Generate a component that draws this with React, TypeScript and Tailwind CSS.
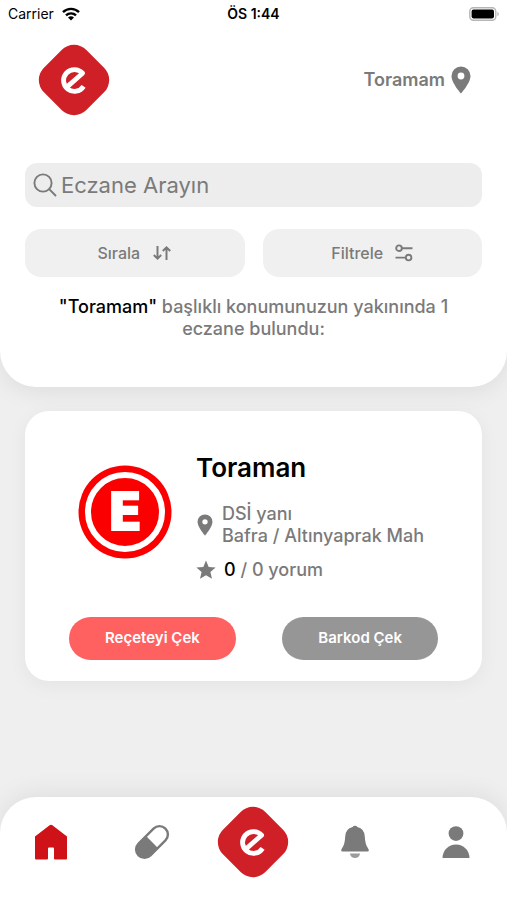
import type { ReactNode } from 'react'

const FONT = "font-['Inter','Noto_Sans',sans-serif]"

interface Pharmacy {
  id: number
  name: string
  street: string
  district: string
  rating: number
  comments: number
}

const pharmacies: Pharmacy[] = [
  { id: 1, name: 'Toraman', street: 'DSİ yanı', district: 'Bafra / Altınyaprak Mah', rating: 0, comments: 0 },
]

export default function App() {
  return (
    <div className={`flex min-h-screen flex-col bg-[#efefef] text-[#7a7a7a] ${FONT}`}>
      <header className="rounded-b-[36px] bg-white pb-[47px] shadow-[0_4px_24px_rgba(0,0,0,0.08)]">
        <StatusBar />

        <div className="flex items-center justify-between pt-4 pr-9 pl-[38px]">
          <a href="#home" aria-label="Ana sayfa">
            <Logo />
          </a>
          <button className="flex items-center gap-1.5 text-lg font-semibold">
            Toramam
            <PinIcon className="h-7 w-5" />
          </button>
        </div>

        <div className="px-[25px] pt-[47px]">
          <label className="flex h-11 items-center gap-1 rounded-xl bg-[#ededed] px-2">
            <SearchIcon />
            <input
              type="text"
              aria-label="Eczane Arayın"
              placeholder="Eczane Arayın"
              className="w-full bg-transparent text-[22px] outline-none placeholder:text-[#7a7a7a]"
            />
          </label>

          <div className="mt-[22px] grid grid-cols-2 gap-[18px]">
            <FilterButton label="Sırala" icon={<SortIcon />} />
            <FilterButton label="Filtrele" icon={<SlidersIcon />} />
          </div>

          <p className="mt-[19px] px-5 text-center text-lg leading-[22px] font-medium">
            <span className="text-black">"Toramam"</span> başlıklı konumunuzun yakınında 1 eczane bulundu:
          </p>
        </div>
      </header>

      <main className="px-[25px] py-6">
        {pharmacies.map((pharmacy) => (
          <PharmacyCard key={pharmacy.id} pharmacy={pharmacy} />
        ))}
      </main>

      <BottomNav />
    </div>
  )
}

function StatusBar() {
  return (
    <div className="grid h-7 grid-cols-3 items-center px-2 text-sm text-black">
      <div className="flex items-center gap-2">
        Carrier
        <svg viewBox="0 0 18 14" className="h-[14px] w-[18px]" fill="none" stroke="currentColor" strokeWidth="2.4">
          <path d="M1 5.2a11.4 11.4 0 0 1 16 0" />
          <path d="M4 8.4a7.1 7.1 0 0 1 10 0" />
          <path d="M9 13.6 6 10.6a4.3 4.3 0 0 1 6 0Z" fill="currentColor" stroke="none" />
        </svg>
      </div>
      <span className="text-center font-semibold">ÖS 1:44</span>
      <svg viewBox="0 0 30 14" className="h-[14px] w-[30px] justify-self-end" fill="none">
        <rect x="0.8" y="0.8" width="26" height="12.4" rx="3.6" stroke="#b5b5b5" strokeWidth="1.4" />
        <rect x="2.6" y="2.6" width="22.4" height="8.8" rx="1.8" fill="#000" />
        <path d="M28.4 5v4c.9-.4 1.4-1.1 1.4-2s-.5-1.6-1.4-2Z" fill="#b5b5b5" />
      </svg>
    </div>
  )
}

function FilterButton({ label, icon }: { label: string, icon: ReactNode }) {
  return (
    <button className="flex h-12 items-center justify-center gap-3 rounded-2xl bg-[#f0f0f0] text-base font-medium">
      {label}
      {icon}
    </button>
  )
}

function PharmacyCard({ pharmacy }: { pharmacy: Pharmacy }) {
  return (
    <article className="rounded-3xl bg-white px-11 pt-[41px] pb-[21px] shadow-[0_4px_20px_rgba(0,0,0,0.05)]">
      <div className="flex items-start gap-6 pl-[9px]">
        <PharmacyEmblem />
        <div>
          <h2 className="text-[26px] leading-8 font-semibold text-black">{pharmacy.name}</h2>
          <div className="mt-[19px] flex items-center gap-2 text-lg leading-[22px] font-medium">
            <PinIcon className="h-[22px] w-[18px] shrink-0" />
            <p>
              {pharmacy.street}
              <br />
              {pharmacy.district}
            </p>
          </div>
          <div className="mt-3 flex items-center gap-2 text-lg leading-[22px] font-medium">
            <StarIcon />
            <p>
              <span className="text-black">{pharmacy.rating}</span> / {pharmacy.comments} yorum
            </p>
          </div>
        </div>
      </div>

      <div className="mt-9 flex justify-between text-[15px] font-semibold text-white">
        <button className="h-[43px] rounded-full bg-[#ff6060] px-9">Reçeteyi Çek</button>
        <button className="h-[43px] rounded-full bg-[#969696] px-9">Barkod Çek</button>
      </div>
    </article>
  )
}

function BottomNav() {
  return (
    <nav className="mt-auto grid h-[103px] grid-cols-5 rounded-t-[36px] bg-white pb-[13px] shadow-[0_-4px_24px_rgba(0,0,0,0.07)]">
      <NavLink label="Ana sayfa" href="#home">
        <svg viewBox="0 0 34 36" className="h-9 w-[34px]" fill="#cf1217">
          <path d="M1 12.5 15.6 1.2q1.4-1 2.8 0L33 12.5v22q0 1-1 1H21q-1 0-1-1V24.5q0-1-1-1h-4q-1 0-1 1v10q0 1-1 1H2q-1 0-1-1Z" />
        </svg>
      </NavLink>
      <NavLink label="İlaçlar" href="#medicines">
        <svg viewBox="0 0 36 36" className="h-9 w-9">
          <g transform="rotate(45 18 18)">
            <rect x="9.6" y="-1" width="16.8" height="38" rx="8.4" fill="none" stroke="#7a7a7a" strokeWidth="2.4" />
            <path d="M9.6 18h16.8v10.6a8.4 8.4 0 0 1-16.8 0Z" fill="#7a7a7a" />
          </g>
        </svg>
      </NavLink>
      <NavLink label="Eczanem" href="#pharmacy">
        <Logo />
      </NavLink>
      <NavLink label="Bildirimler" href="#notifications">
        <svg viewBox="0 0 28 34" className="h-[34px] w-7" fill="#7a7a7a">
          <path d="M14 .8q1.6 0 2.4 1.2 7.2 1.8 7.4 9.6.2 8 3.6 12.4 1.2 2.4-1 2.4H1.6q-2.2 0-1-2.4 3.4-4.4 3.6-12.4.2-7.8 7.4-9.6Q12.4.8 14 .8Z" />
          <path d="M8.8 28.4h10.4q-1.4 4.6-5.2 4.6t-5.2-4.6Z" opacity="0.75" />
        </svg>
      </NavLink>
      <NavLink label="Profil" href="#profile">
        <svg viewBox="0 0 28 34" className="h-[34px] w-7" fill="#7a7a7a">
          <circle cx="14" cy="8.6" r="7.4" />
          <path d="M.5 33C.5 25.2 6.5 19.4 14 19.4S27.5 25.2 27.5 33Z" />
        </svg>
      </NavLink>
    </nav>
  )
}

function NavLink({ label, href, children }: { label: string, href: string, children: ReactNode }) {
  return (
    <a href={href} aria-label={label} className="flex items-center justify-center">
      {children}
    </a>
  )
}

function Logo() {
  return (
    <svg viewBox="0 0 72 72" className="size-[72px]">
      <rect x="6" y="6" width="60" height="60" rx="17.5" fill="#cf2027" transform="rotate(45 36 36)" />
      {/* ring with a diagonal bar */}
      <g fill="none" stroke="#fff" strokeWidth="4.8" strokeLinejoin="round">
        <path d="M28.5 43.4 44.6 29.2A10.9 10.9 0 1 0 45.6 42.4" />
      </g>
    </svg>
  )
}

function PharmacyEmblem() {
  return (
    <svg viewBox="0 0 94 94" className="mt-[13px] size-[94px] shrink-0">
      <circle cx="47" cy="47" r="46.5" fill="#fb0000" />
      <circle cx="47" cy="47" r="37" fill="none" stroke="#fff" strokeWidth="6" />
      <text
        x="47"
        y="65"
        textAnchor="middle"
        className="font-['DejaVu_Sans',sans-serif] text-[51px] font-bold"
        fill="#fff"
        stroke="#fff"
        strokeWidth="2"
      >
        E
      </text>
    </svg>
  )
}

function PinIcon({ className }: { className: string }) {
  return (
    <svg viewBox="0 0 20 28" className={className} fill="currentColor">
      <path fillRule="evenodd" d="M10 .5A9.5 9.5 0 0 0 .5 10C.5 17 10 27.5 10 27.5S19.5 17 19.5 10A9.5 9.5 0 0 0 10 .5Zm0 6.1a3.4 3.4 0 1 1 0 6.8 3.4 3.4 0 0 1 0-6.8Z" />
    </svg>
  )
}

function StarIcon() {
  return (
    <svg viewBox="0 0 20 20" className="size-5 shrink-0" fill="currentColor">
      <path d="m10 .5 2.7 6.4 6.9.6-5.2 4.5 1.6 6.8-6-3.6-6 3.6L5.6 12 .4 7.5l6.9-.6Z" />
    </svg>
  )
}

function SearchIcon() {
  return (
    <svg viewBox="0 0 24 24" className="size-6 shrink-0" fill="none" stroke="currentColor" strokeWidth="1.9" strokeLinecap="round">
      <circle cx="10" cy="10" r="8.6" />
      <path d="m16.2 16.2 6.3 6.3" />
    </svg>
  )
}

function SortIcon() {
  return (
    <svg viewBox="0 0 20 16" className="h-4 w-5" fill="none" stroke="currentColor" strokeWidth="2">
      <path d="M5.5 1v12.5M1.8 10l3.7 3.7L9.2 10M14.5 15V2.5M10.8 6l3.7-3.7L18.2 6" />
    </svg>
  )
}

function SlidersIcon() {
  return (
    <svg viewBox="0 0 18 18" className="size-[18px]" fill="none" stroke="currentColor" strokeWidth="1.9">
      <circle cx="4" cy="4.2" r="2.8" />
      <path d="M6.8 4.2H17.5M.5 13.6h10.2" />
      <circle cx="13.6" cy="13.6" r="2.8" />
    </svg>
  )
}
